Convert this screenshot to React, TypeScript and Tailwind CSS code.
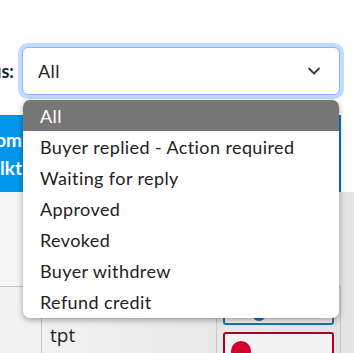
import { useState } from 'react';

const options = [
  'All',
  'Buyer replied - Action required',
  'Waiting for reply',
  'Approved',
  'Revoked',
  'Buyer withdrew',
  'Refund credit',
];

const Chevron = () => (
  <svg width="14" height="14" viewBox="0 0 14 14" fill="none" stroke="#343a40" strokeWidth="1.8" strokeLinecap="round" strokeLinejoin="round">
    <path d="M2 4.5l5 5 5-5" />
  </svg>
);

const App = () => {
  const [selected] = useState('All');

  return (
    <div className="relative w-[354px] h-[353px] overflow-hidden bg-white font-['Lato',sans-serif]">
      {/* filter row */}
      <div className="pt-[47px] flex items-center gap-[8px]">
        <div className="w-[14px] overflow-hidden flex justify-end whitespace-nowrap font-bold text-[18px] text-[#212529]">
          Status:
        </div>
        <div className="w-[318px] h-[48px] rounded-[6px] border border-[#86b7fe] shadow-[0_0_0_4px_#c2dbfe] bg-white flex items-center justify-between pl-[15px] pr-[18px] text-[18px] tracking-[0.4px] text-[#212529]">
          <span>{selected}</span>
          <Chevron />
        </div>
      </div>

      {/* table behind the menu */}
      <div className="mt-[20px] w-[341px]">
        <div className="h-[77px] bg-[#0096ee] border-r-2 border-[#0b74c4] flex flex-col justify-center gap-[4px]">
          <div className="w-[22px] overflow-hidden flex justify-end whitespace-nowrap font-bold text-[19px] text-white leading-[24px]">Kom</div>
          <div className="w-[22px] overflow-hidden flex justify-end whitespace-nowrap font-bold text-[19px] text-white leading-[24px]">Artilkt</div>
        </div>
        <div className="h-[95px] bg-linear-to-r from-[#f7f7f7] to-[#e6e6e6] border-b border-[#c6c6c6]" />
        <div className="flex h-[80px] bg-linear-to-r from-[#f4f4f4] to-[#e2e2e2] border-r border-[#c6c6c6]">
          <div className="w-[42px] border-r border-[#c6c6c6]" />
          <div className="w-[175px] border-r border-[#c6c6c6] pl-[8px] pt-[34px] text-[19px] text-[#212529] font-['Open_Sans',sans-serif]">
            tpt
          </div>
          <div className="flex-1 pl-[6px] pr-[6px] flex flex-col gap-[7px] -mt-[2px]">
            <div className="h-[47px] rounded-[3px] border-2 border-[#1a73c0] bg-[#f2f2f2] flex justify-center">
              <div className="mt-[20px] w-[14px] h-[14px] rounded-full bg-[#1a73c0] ml-[-40px]" />
            </div>
            <div className="h-[40px] rounded-[3px] border-2 border-[#a8002c] bg-[#f2f2f2] flex justify-start pl-[6px]">
              <div className="mt-[7px] w-[20px] h-[20px] rounded-full bg-[#d0002f]" />
            </div>
          </div>
        </div>
      </div>
      <div className="absolute top-[192px] left-[341px] w-[13px] h-[161px] bg-[#e4e4e4]" />

      {/* open dropdown menu */}
      <ul className="absolute left-[23px] top-[100px] w-[316px] h-[218px] rounded-[7px] bg-white overflow-hidden shadow-[0_2px_6px_rgba(0,0,0,0.35)] text-[18px] tracking-[0.4px]">
        {options.map(o => (
          <li
            key={o}
            className={`h-[31px] pl-[17px] pt-[1px] flex items-center whitespace-nowrap ${o === selected ? 'bg-[#767676] text-white' : 'text-[#222222]'}`}
          >
            {o}
          </li>
        ))}
      </ul>
    </div>
  );
};

export default App;
